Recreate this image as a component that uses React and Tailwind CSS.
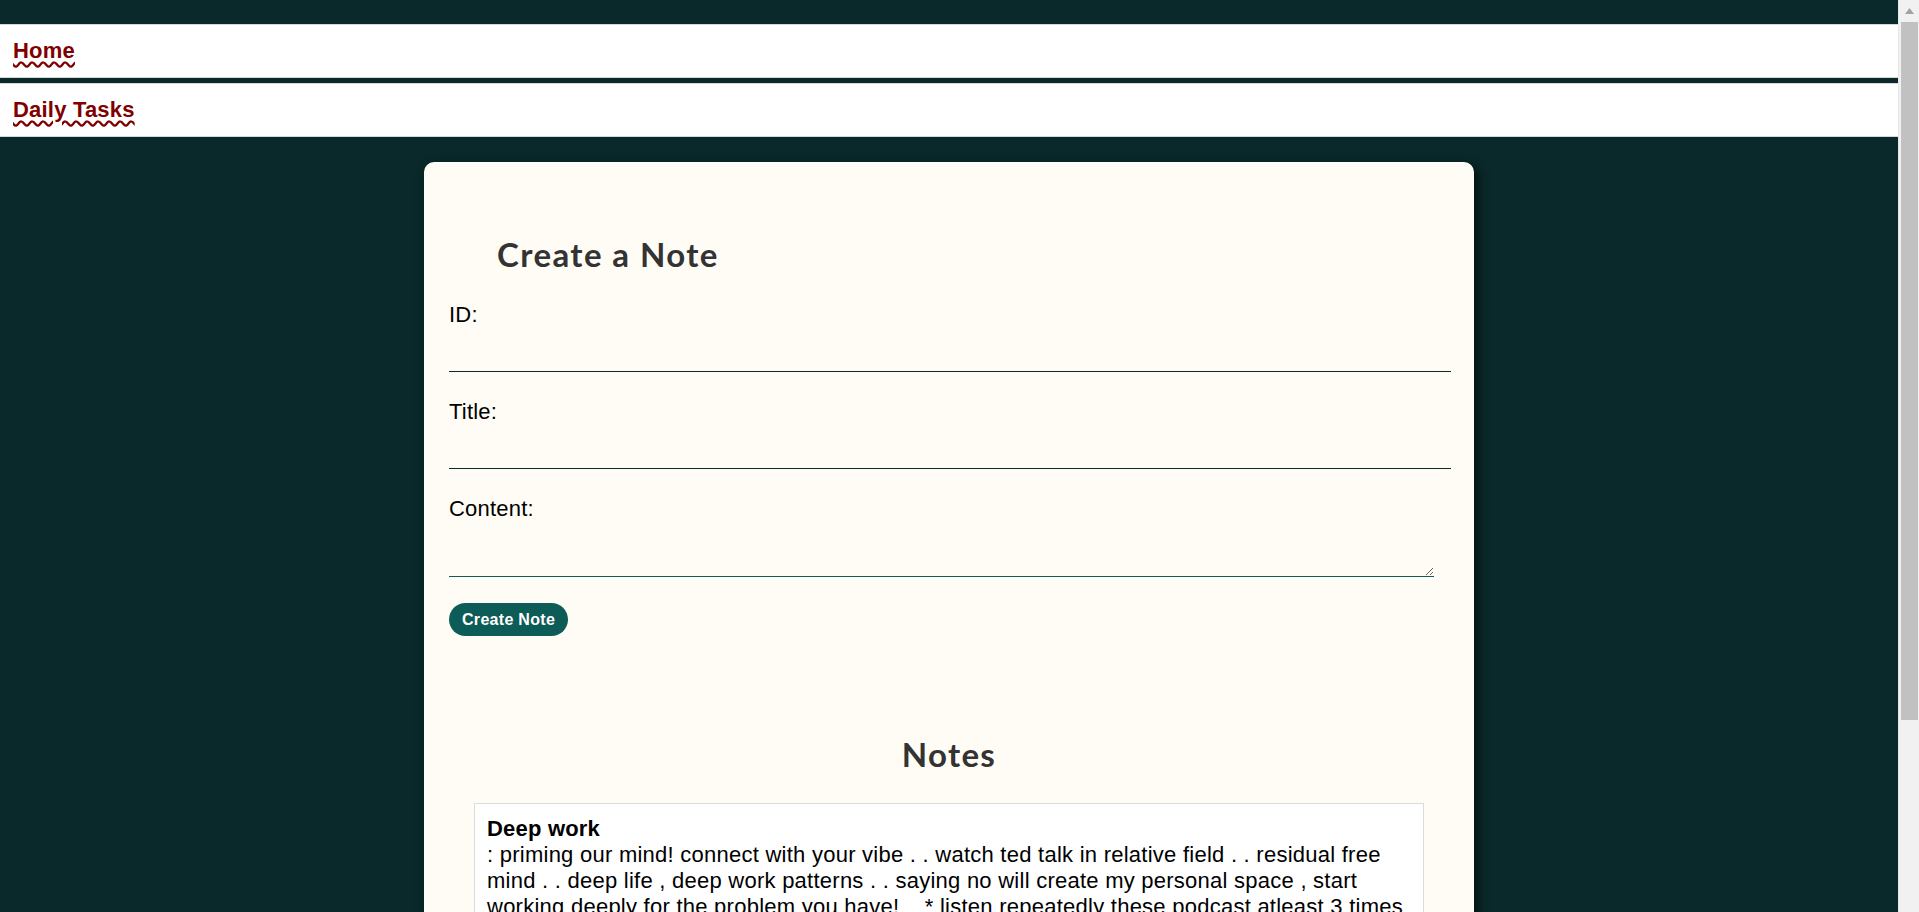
import React from "react";

const noteText =
  ": priming our mind! connect with your vibe . . watch ted talk in relative field . . residual free mind . . deep life , deep work patterns . . saying no will create my personal space , start working deeply for the problem you have!    * listen repeatedly these podcast atleast 3 times . . focus on one task at a time , remove distractions and give your full attention to the work in front of you . . rest well , come back stronger";

const NavItem = ({ label }) => (
  <div className="bg-white border-y border-[#d6d6d6] px-[13px] py-3">
    <a
      href="#"
      className="text-[22px] leading-[28px] font-bold text-[#800000] underline decoration-wavy decoration-[#800000] underline-offset-[3px]"
    >
      {label}
    </a>
  </div>
);

const Field = ({ label, first }) => (
  <div className={first ? "" : "mt-[27px]"}>
    <label className="block text-[22px] leading-[25px] text-black">
      {label}
    </label>
    <input
      type="text"
      className="block w-[1002px] h-[45px] bg-transparent border-b border-[#0b2a2a] outline-none"
    />
  </div>
);

const Scrollbar = () => (
  <div className="w-[21px] h-full bg-[#f1f1f1] flex flex-col items-center border-l border-[#e6e6e6]">
    <div className="h-[22px] w-full flex items-center justify-center">
      <svg width="9" height="6" viewBox="0 0 9 6">
        <path d="M4.5 0 L9 6 L0 6 Z" fill="#a3a3a3" />
      </svg>
    </div>
    <div className="w-[17px] h-[698px] bg-[#c1c1c1]" />
  </div>
);

export default function App() {
  return (
    <div
      className="flex h-screen overflow-hidden bg-[#0a292a] tracking-[0.2px]"
      style={{ fontFamily: '"Liberation Sans", Arial, sans-serif' }}
    >
      <div className="flex-1 overflow-hidden">
        <nav className="pt-[24px] flex flex-col gap-[5px]">
          <NavItem label="Home" />
          <NavItem label="Daily Tasks" />
        </nav>

        <div className="mt-[25px] mx-auto w-[1050px] bg-[#fffcf5] rounded-[10px] shadow-[4px_4px_12px_rgba(0,0,0,0.65)] px-[25px] pt-[72px] pb-10">
          <h2 className="pl-[48px] text-[33px] leading-[40px] font-bold tracking-[1.4px] text-[#333] font-['Lato',sans-serif]">
            Create a Note
          </h2>

          <form className="mt-[28px]">
            <Field label="ID:" first />
            <Field label="Title:" />
            <div className="mt-[27px]">
              <label className="block text-[22px] leading-[25px] text-black">
                Content:
              </label>
              <textarea className="block w-[985px] h-[56px] bg-transparent border-b border-[#0e5f59] outline-none resize-y" />
            </div>
            <button
              type="button"
              className="mt-[26px] h-[33px] px-[13px] rounded-full bg-[#0d5c57] text-white text-[16px] font-bold tracking-[0.3px]"
            >
              Create Note
            </button>
          </form>

          <h2 className="mt-[98px] text-center text-[33px] leading-[40px] font-bold tracking-[1.3px] text-[#333] font-['Lato',sans-serif]">
            Notes
          </h2>

          <div className="mt-[29px] mx-auto w-[950px] bg-white border border-[#dcdcdc] p-3">
            <div className="text-[22px] leading-[26px] font-bold text-black">
              Deep work
            </div>
            <p className="text-[22px] leading-[26px] tracking-[0.25px] text-black whitespace-pre-wrap">
              {noteText}
            </p>
          </div>
        </div>
      </div>
      <Scrollbar />
    </div>
  );
}
